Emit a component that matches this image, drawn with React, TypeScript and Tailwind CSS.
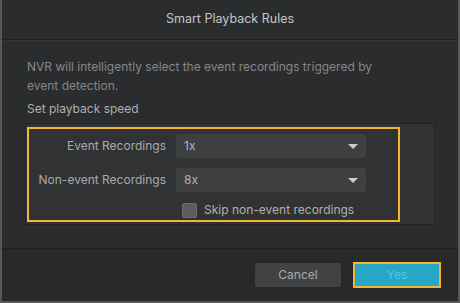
export default function App() {
  return (
    <div
      className="w-[460px] h-[303px] bg-[#2b2c2d] border-x-2 border-b-2 border-[#56585a] flex flex-col text-[12px]"
      style={{ fontFamily: "Inter, 'Noto Sans', sans-serif" }}
    >
      {/* header */}
      <div className="h-[40px] shrink-0 flex items-center justify-center text-[12.5px] text-[#c4c5c6] border-b border-[#1e1f20]">
        Smart Playback Rules
      </div>

      {/* body */}
      <div className="flex-1 border-t border-[#343536] pl-[23px] pt-[16px]">
        <p className="text-[#858789] leading-[19px] w-[360px] pl-[2px]">
          NVR will intelligently select the event recordings triggered by event detection.
        </p>
        <div className="mt-[5px] pl-[2px] text-[#aeb0b2] leading-[18px]">Set playback speed</div>

        <div className="mt-[5px] w-[410px] h-[102px] bg-[#303233] border border-[#222324] pl-[1px] pt-[3px]">
          <div className="w-[373px] h-[95px] border-2 border-[#f2b630] pt-[5px]">
            <div className="flex items-center h-[24px]">
              <div className="w-[137px] text-right text-[#a9abad]">Event Recordings</div>
              <div className="ml-[10px] w-[190px] h-[24px] rounded-[3px] bg-[#3d3f40] flex items-center justify-between px-[8px] text-[#b4b6b8]">
                <span>1x</span>
                <span className="w-0 h-0 border-x-[5px] border-x-transparent border-t-[5px] border-t-[#c9cbcd]" />
              </div>
            </div>
            <div className="flex items-center h-[24px] mt-[10px]">
              <div className="w-[137px] text-right text-[#a9abad]">Non-event Recordings</div>
              <div className="ml-[10px] w-[190px] h-[24px] rounded-[3px] bg-[#3d3f40] flex items-center justify-between px-[8px] text-[#b4b6b8]">
                <span>8x</span>
                <span className="w-0 h-0 border-x-[5px] border-x-transparent border-t-[5px] border-t-[#c9cbcd]" />
              </div>
            </div>
            <div className="flex items-center mt-[9px] ml-[153px]">
              <span className="w-[15px] h-[15px] rounded-[2px] bg-[#5a5c5e] border border-[#6a6c6e]" />
              <span className="ml-[7px] text-[#aeb0b2]">Skip non-event recordings</span>
            </div>
          </div>
        </div>
      </div>

      {/* footer */}
      <div className="h-[53px] shrink-0 border-t border-[#1e1f20] bg-[#29292a] flex items-center justify-end pr-[17px] gap-[12px]">
        <button className="w-[86px] h-[24px] rounded-[2px] bg-[#414243] text-[#a9abad]">Cancel</button>
        <button className="w-[88px] h-[26px] border-2 border-[#f2b630] bg-[#27a6c6] text-[#5cc3dc]">Yes</button>
      </div>
    </div>
  );
}
